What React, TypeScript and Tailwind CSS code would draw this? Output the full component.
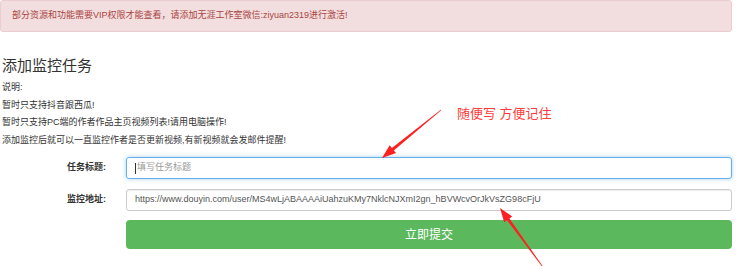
import React from 'react';

const font = { fontFamily: '"Liberation Sans", "Noto Sans CJK SC", sans-serif' };

const Arrows = () => (
  <svg className="absolute left-0 top-0 pointer-events-none" width="745" height="266" viewBox="0 0 745 266">
    <polygon
      fill="#ff1f1f"
      points="441.2,110.2 393.8,150.4 396.1,153.1 382,158 389.7,145.3 391.9,148 440.8,109.8"
    />
    <polygon
      fill="#ff1f1f"
      points="545.2,269.8 509.4,218.4 512.2,216.4 500,208 504.2,222.2 507,220.2 544.8,270.2"
    />
  </svg>
);

const App = () => {
  return (
    <div className="relative w-[745px] h-[266px] bg-white overflow-hidden" style={font}>
      <div className="w-[732px]">
        <div className="h-[32px] flex items-center pl-[11px] bg-[#f2dede] border border-[#ebccd1] rounded-[3px] text-[9px] text-[#a94442]">
          部分资源和功能需要VIP权限才能查看，请添加无涯工作室微信:ziyuan2319进行激活!
        </div>

        <h3 className="mt-[24px] pl-[2px] h-[20px] leading-[20px] text-[15px] text-[#333]">添加监控任务</h3>

        <div className="mt-[3px] pl-[2px] text-[9px] text-[#333]">
          <div className="h-[17.5px] leading-[17.5px]">说明:</div>
          <div className="h-[17.5px] leading-[17.5px]">暂时只支持抖音跟西瓜!</div>
          <div className="h-[17.5px] leading-[17.5px]">暂时只支持PC端的作者作品主页视频列表!请用电脑操作!</div>
          <div className="h-[17.5px] leading-[17.5px]">添加监控后就可以一直监控作者是否更新视频,有新视频就会发邮件提醒!</div>
        </div>

        <form className="mt-[8px] flex flex-col gap-[10px]">
          <div className="flex items-center">
            <label className="w-[106px] text-right text-[9px] font-bold text-[#333]">任务标题:</label>
            <div className="ml-[20px] flex-1 h-[22px] flex items-center px-[8px] border border-[#66afe9] rounded-[3px] shadow-[0_0_4px_rgba(102,175,233,0.6)]">
              <span className="w-px h-[11px] bg-[#333] mr-[1px]" />
              <span className="text-[9px] text-[#999]">填写任务标题</span>
            </div>
          </div>
          <div className="flex items-center">
            <label className="w-[106px] text-right text-[9px] font-bold text-[#333]">监控地址:</label>
            <div className="ml-[20px] flex-1 h-[22px] flex items-center px-[8px] border border-[#ccc] rounded-[3px] shadow-[inset_0_1px_1px_rgba(0,0,0,0.075)] text-[9px] text-[#555] whitespace-nowrap overflow-hidden">
              https://www.douyin.com/user/MS4wLjABAAAAiUahzuKMy7NklcNJXmI2gn_hBVWcvOrJkVsZG98cFjU
            </div>
          </div>
          <div className="flex -mt-[1px]">
            <div className="w-[126px]" />
            <button type="button" className="flex-1 h-[29px] bg-[#5cb85c] rounded-[4px] text-white text-[12px]">
              立即提交
            </button>
          </div>
        </form>
      </div>

      <div className="absolute left-[457px] top-[105px] text-[13px] leading-[18px] text-[#ff3b3b]">随便写 方便记住</div>
      <Arrows />
    </div>
  );
};

export default App;
